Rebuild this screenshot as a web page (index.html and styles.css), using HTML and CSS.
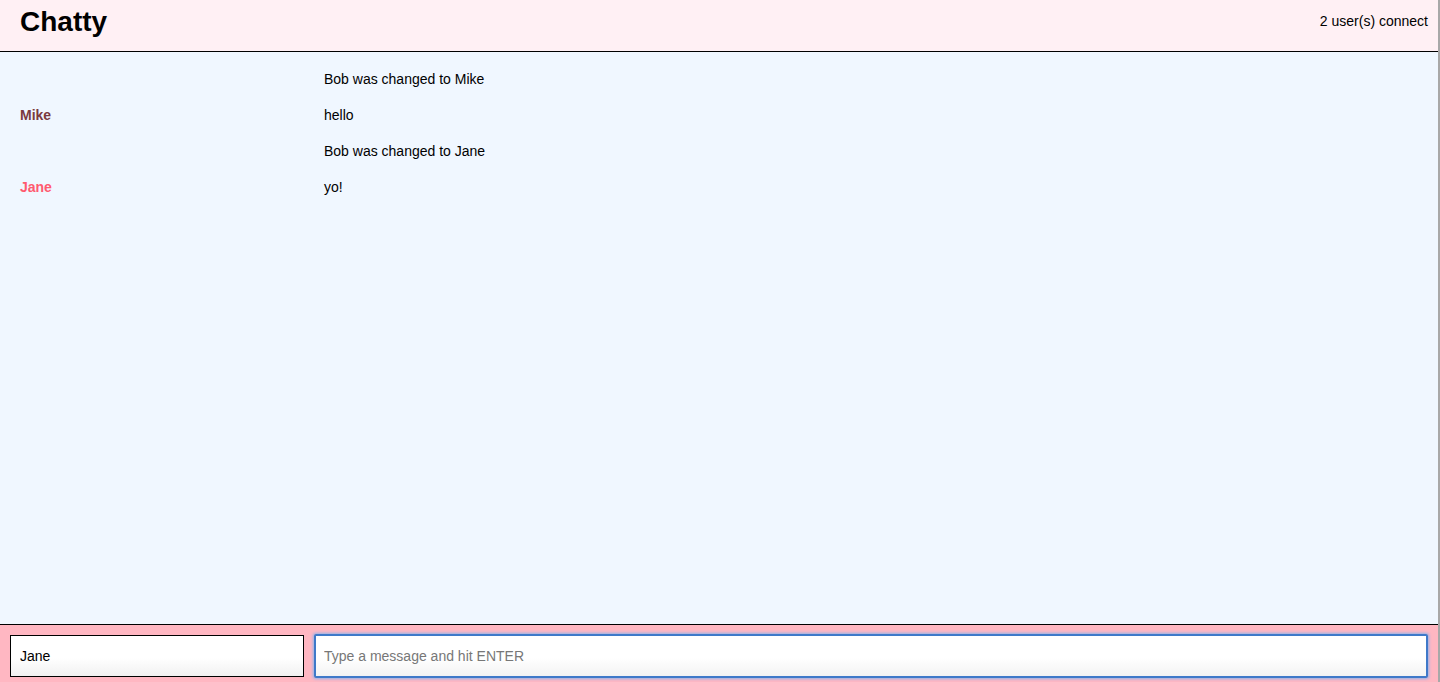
FILE: index.html
```html
<!DOCTYPE html>
<html lang="en">
<head>
<meta charset="utf-8">
<title>Chatty</title>
<link rel="stylesheet" href="styles.css">
</head>
<body>
<div class="app">
  <header class="navbar">
    <h1 class="brand">Chatty</h1>
    <span class="user-count">2 user(s) connect</span>
  </header>
  <main class="messages">
    <div class="message system">
      <span class="username"></span>
      <span class="content">Bob was changed to Mike</span>
    </div>
    <div class="message">
      <span class="username mike">Mike</span>
      <span class="content">hello</span>
    </div>
    <div class="message system">
      <span class="username"></span>
      <span class="content">Bob was changed to Jane</span>
    </div>
    <div class="message">
      <span class="username jane">Jane</span>
      <span class="content">yo!</span>
    </div>
  </main>
  <footer class="chatbar">
    <input class="chatbar-username" type="text" value="Jane">
    <input class="chatbar-message" type="text" placeholder="Type a message and hit ENTER">
  </footer>
</div>
</body>
</html>
```

FILE: styles.css
```css
html, body {
  margin: 0;
  padding: 0;
  height: 100%;
  overflow: hidden;
}

body {
  background: #a8a8a8;
  font-family: "Liberation Sans", Arial, Helvetica, sans-serif;
  font-size: 14px;
  color: #000;
}

.app {
  display: flex;
  flex-direction: column;
  height: 100vh;
  margin-right: 2px;
}

.navbar {
  flex: 0 0 auto;
  height: 51px;
  display: flex;
  justify-content: space-between;
  align-items: flex-start;
  padding: 0 10px 0 20px;
  background: #fff0f4;
  border-bottom: 1px solid #000;
  white-space: nowrap;
  overflow: hidden;
}

.brand {
  margin: 6px 0 0;
  font-size: 28px;
  font-weight: bold;
  line-height: 32px;
}

.user-count {
  margin-top: 13px;
  line-height: 16px;
  font-size: 14px;
}

.messages {
  flex: 1 1 auto;
  background: #f0f7ff;
  padding-top: 9px;
  overflow: hidden;
}

.message {
  display: grid;
  grid-template-columns: 304px 1fr;
  padding: 10px 20px;
  line-height: 16px;
}

.username {
  font-weight: bold;
}

.username.mike {
  color: #7a3a40;
}

.username.jane {
  color: #ff5a70;
}

.chatbar {
  flex: 0 0 58px;
  display: flex;
  align-items: flex-start;
  gap: 10px;
  padding: 10px 10px 0;
  background: #ffb7c2;
  border-top: 1px solid #000;
  box-sizing: border-box;
}

.chatbar input {
  font-family: "Liberation Sans", Arial, Helvetica, sans-serif;
  font-size: 14px;
  box-sizing: border-box;
  margin: 0;
  outline: none;
  color: #000;
}

.chatbar-username {
  flex: 0 0 294px;
  height: 42px;
  border: 1px solid #000;
  padding: 0 9px;
  background: linear-gradient(to bottom, #ffffff 55%, #f1f1f1 100%);
}

.chatbar-message {
  flex: 1 1 auto;
  height: 44px;
  margin-top: -1px !important;
  border: 2px solid #3f79c9;
  border-radius: 2px;
  padding: 0 8px;
  background: linear-gradient(to bottom, #ffffff 55%, #f3f3f3 100%);
  box-shadow: 0 0 3px 1px #8fb3ec;
}

.chatbar-message::placeholder {
  color: #777;
}
```
